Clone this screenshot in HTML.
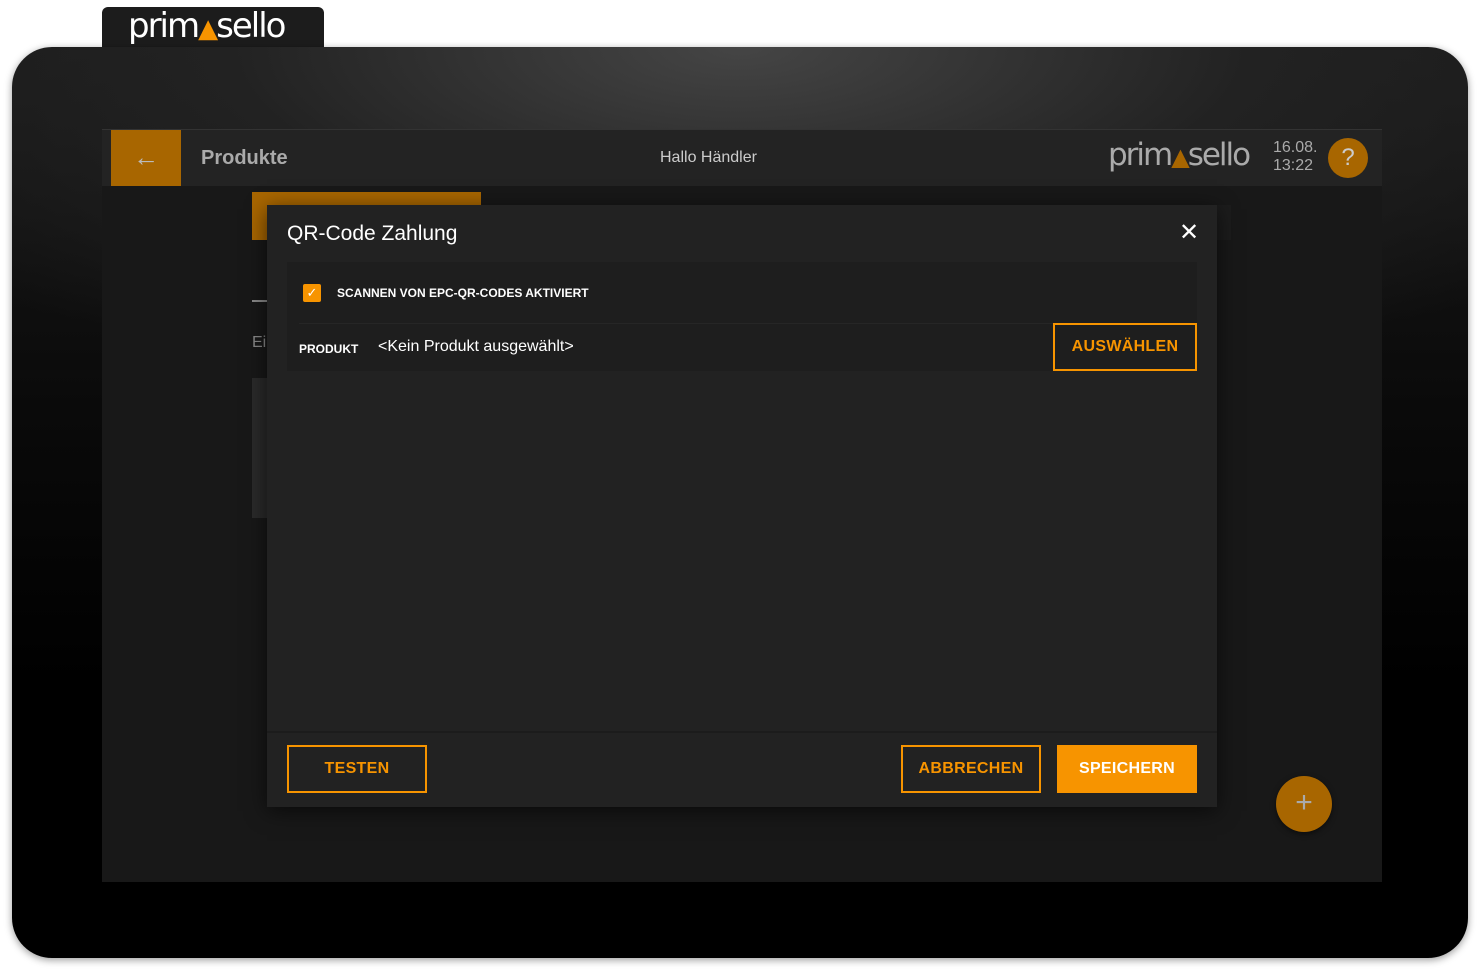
<!DOCTYPE html>
<html><head><meta charset="utf-8"><style>
*{margin:0;padding:0;box-sizing:border-box}
body{width:1480px;height:975px;background:#fff;position:relative;overflow:hidden;font-family:"Liberation Sans",sans-serif}
.abs{position:absolute}
.tab{left:102px;top:7px;width:222px;height:44px;background:#1c1c1c;border-radius:6px 6px 0 0}
.logo{font-family:"DejaVu Sans","Liberation Sans",sans-serif;letter-spacing:-2px;white-space:nowrap}
.frame{left:12px;top:47px;width:1456px;height:911px;border-radius:40px;background:radial-gradient(ellipse 70% 40% at 50% 0%,#454545 0%,#222 50%,rgba(0,0,0,0) 100%),linear-gradient(180deg,#1a1a1a 0%,#0a0a0a 40%,#000 70%);box-shadow:0 2px 8px rgba(0,0,0,.4)}
.screen{left:102px;top:129px;width:1280px;height:753px;background:#181818}
.hdr{left:102px;top:129px;width:1280px;height:57px;background:#232323;border-top:1px solid #333}
.btn{position:absolute;display:flex;align-items:center;justify-content:center;font-weight:bold;font-size:16px;letter-spacing:.3px;color:#f79400;border:2px solid #f79400}
</style></head><body>
<div class="abs tab"></div>
<div class="abs logo" style="left:128px;top:6px;font-size:34px;color:#fff">prim<span style="color:#f79400;font-size:26px">▲</span>sello</div>
<div class="abs frame"></div>
<div class="abs screen"></div>
<div class="abs hdr"></div>
<div class="abs" style="left:111px;top:130px;width:70px;height:56px;background:#a86600;color:#bbb;font-size:26px;text-align:center;line-height:54px">←</div>
<div class="abs" style="left:201px;top:147px;color:#aaa;font-size:20px;font-weight:bold">Produkte</div>
<div class="abs" style="left:660px;top:149px;color:#ccc;font-size:16px">Hallo Händler</div>
<div class="abs logo" style="left:1108px;top:137px;font-size:31px;color:#aaa">prim<span style="color:#a86600;font-size:24px">▲</span>sello</div>
<div class="abs" style="left:1273px;top:139px;color:#aaa;font-size:16px;line-height:18px">16.08.<br>13:22</div>
<div class="abs" style="left:1328px;top:138px;width:40px;height:40px;border-radius:50%;background:#a86600;color:#ccc;font-size:24px;text-align:center;line-height:40px">?</div>
<div class="abs" style="left:252px;top:192px;width:229px;height:48px;background:#a86600"></div>
<div class="abs" style="left:481px;top:205px;width:750px;height:35px;background:#1c1c1c"></div>
<div class="abs" style="left:252px;top:300px;width:15px;height:2px;background:#888"></div>
<div class="abs" style="left:252px;top:334px;color:#888;font-size:16px">Ei</div>
<div class="abs" style="left:252px;top:378px;width:15px;height:140px;background:#2a2a2a"></div>
<div class="abs" style="left:267px;top:205px;width:950px;height:602px;background:#222;box-shadow:0 4px 20px rgba(0,0,0,.6)"></div>
<div class="abs" style="left:287px;top:222px;color:#fff;font-size:21px">QR-Code Zahlung</div>
<div class="abs" style="left:1179px;top:218px;color:#fff;font-size:24px">✕</div>
<div class="abs" style="left:287px;top:262px;width:910px;height:109px;background:#1e1e1e"></div>
<div class="abs" style="left:299px;top:323px;width:898px;height:1px;background:#262626"></div>
<div class="abs" style="left:303px;top:284px;width:18px;height:18px;background:#f79400;border-radius:2px;color:#fff;font-size:13px;text-align:center;line-height:18px">✓</div>
<div class="abs" style="left:337px;top:286px;color:#fff;font-size:12px;font-weight:bold">SCANNEN VON EPC-QR-CODES AKTIVIERT</div>
<div class="abs" style="left:299px;top:342px;color:#fff;font-size:12px;font-weight:bold">PRODUKT</div>
<div class="abs" style="left:378px;top:338px;color:#fff;font-size:16px">&lt;Kein Produkt ausgewählt&gt;</div>
<div class="btn" style="left:1053px;top:323px;width:144px;height:48px">AUSWÄHLEN</div>
<div class="abs" style="left:267px;top:731px;width:950px;height:2px;background:#1c1c1c"></div>
<div class="btn" style="left:287px;top:745px;width:140px;height:48px">TESTEN</div>
<div class="btn" style="left:901px;top:745px;width:140px;height:48px">ABBRECHEN</div>
<div class="btn" style="left:1057px;top:745px;width:140px;height:48px;background:#f79400;color:#fff">SPEICHERN</div>
<div class="abs" style="left:1276px;top:776px;width:56px;height:56px;border-radius:50%;background:#a86600;color:#aaa;font-size:30px;text-align:center;line-height:54px;box-shadow:0 2px 6px rgba(0,0,0,.5)">+</div>
</body></html>
